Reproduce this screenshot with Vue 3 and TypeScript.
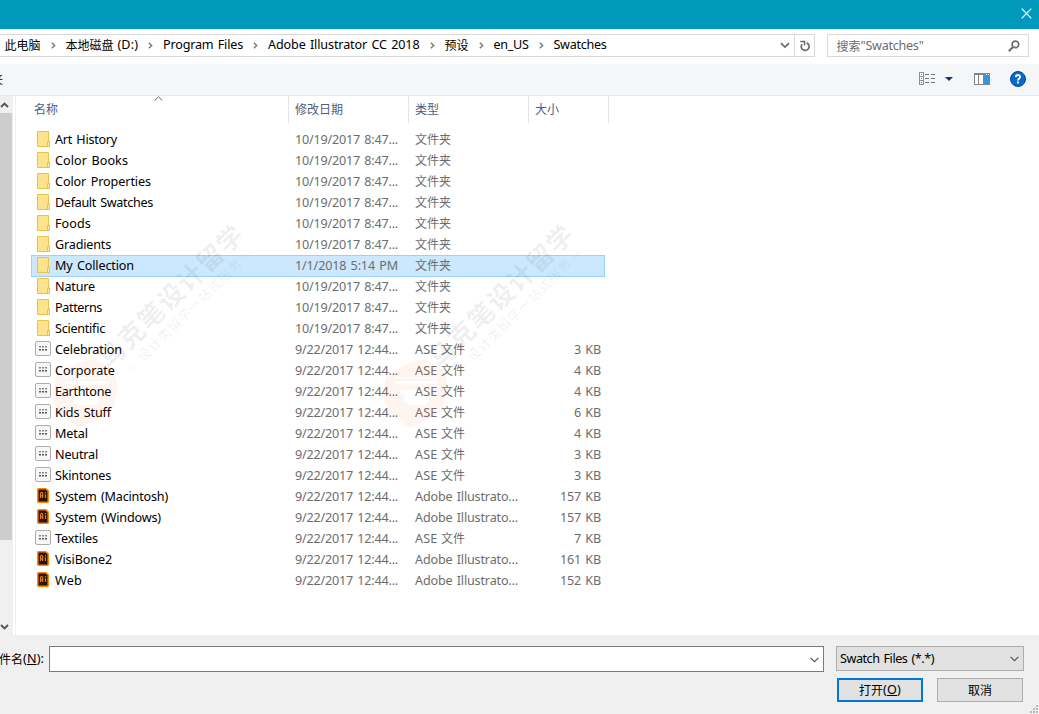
<script setup lang="ts">
type Kind = 'folder' | 'ase' | 'ai'
interface Entry { name: string; w: number; kind: Kind; date: string; size?: string }

const OCT = '10/19/2017 8:47...'
const SEP = '9/22/2017 12:44...'

const entries: Entry[] = [
  { name: 'Art History', w: 62, kind: 'folder', date: OCT },
  { name: 'Color Books', w: 73, kind: 'folder', date: OCT },
  { name: 'Color Properties', w: 96, kind: 'folder', date: OCT },
  { name: 'Default Swatches', w: 98, kind: 'folder', date: OCT },
  { name: 'Foods', w: 36, kind: 'folder', date: OCT },
  { name: 'Gradients', w: 56, kind: 'folder', date: OCT },
  { name: 'My Collection', w: 79, kind: 'folder', date: '1/1/2018 5:14 PM' },
  { name: 'Nature', w: 40, kind: 'folder', date: OCT },
  { name: 'Patterns', w: 47, kind: 'folder', date: OCT },
  { name: 'Scientific', w: 50, kind: 'folder', date: OCT },
  { name: 'Celebration', w: 67, kind: 'ase', date: SEP, size: '3' },
  { name: 'Corporate', w: 60, kind: 'ase', date: SEP, size: '4' },
  { name: 'Earthtone', w: 56, kind: 'ase', date: SEP, size: '4' },
  { name: 'Kids Stuff', w: 56, kind: 'ase', date: SEP, size: '6' },
  { name: 'Metal', w: 33, kind: 'ase', date: SEP, size: '4' },
  { name: 'Neutral', w: 43, kind: 'ase', date: SEP, size: '3' },
  { name: 'Skintones', w: 56, kind: 'ase', date: SEP, size: '3' },
  { name: 'System (Macintosh)', w: 113, kind: 'ai', date: SEP, size: '157' },
  { name: 'System (Windows)', w: 106, kind: 'ai', date: SEP, size: '157' },
  { name: 'Textiles', w: 43, kind: 'ase', date: SEP, size: '7' },
  { name: 'VisiBone2', w: 57, kind: 'ai', date: SEP, size: '161' },
  { name: 'Web', w: 27, kind: 'ai', date: SEP, size: '152' },
]
const selected = 'My Collection'

const crumbs = [
  { text: '此电脑', w: 36 },
  { text: '本地磁盘', w: 48, tail: '(D:)', tw: 20.5 },
  { text: 'Program Files', w: 80 },
  { text: 'Adobe Illustrator CC 2018', w: 151.5 },
  { text: '预设', w: 24 },
  { text: 'en_US', w: 35 },
  { text: 'Swatches', w: 53 },
]
const isLatin = (s: string) => /^[\x00-\x7f]+$/.test(s)

// Spreads letter spacing so that a label takes up the given advance width.
const vFit = {
  mounted(el: HTMLElement, binding: { value: number }) {
    const n = (el.textContent ?? '').length
    const natural = el.getBoundingClientRect().width
    if (n) el.style.letterSpacing = `${(binding.value - natural) / n}px`
  },
}
</script>

<template>
  <div class="dialog">
    <header class="title">
      <svg width="11" height="11" viewBox="0 0 11 11"><path d="M.7.7l9.6 9.6M10.3.7L.7 10.3" stroke="#fff" stroke-width="1.2" /></svg>
    </header>

    <div class="nav">
      <div class="address">
        <template v-for="(c, i) in crumbs" :key="c.text">
          <span v-if="i" class="sep"><svg width="5" height="7" viewBox="0 0 5 7"><path d="M.8.7L3.7 3.5.8 6.3" fill="none" stroke="#777" stroke-width="1.4" /></svg></span>
          <span v-fit="c.w" class="crumb" :class="isLatin(c.text) ? 'lat' : 'cjk'">{{ c.text }}</span>
          <span v-if="c.tail" v-fit="c.tw" class="crumb lat tail">{{ c.tail }}</span>
        </template>
        <span class="drop"><svg width="10" height="7" viewBox="0 0 10 7"><path d="M1 1.2l4 3.9 4-3.9" fill="none" stroke="#6c6c6c" stroke-width="1.8" /></svg></span>
        <span class="refresh"><svg width="10" height="12" viewBox="0 0 10 12"><path d="M6.6 2.9A3.9 3.9 0 1 1 2 4.2" fill="none" stroke="#6c6c6c" stroke-width="1.7" /><path d="M.3 1.4h4.2v4.1" fill="none" stroke="#6c6c6c" stroke-width="1.5" /></svg></span>
      </div>
      <div class="search">
        <span class="cjk">搜索</span><span v-fit="63" class="lat">"Swatches"</span>
        <svg width="12" height="12" viewBox="0 0 12 12"><circle cx="7.4" cy="4.4" r="3.3" fill="none" stroke="#6c6c6c" stroke-width="1.7" /><path d="M5 7L.8 11.2" stroke="#6c6c6c" stroke-width="2" /></svg>
      </div>
    </div>

    <div class="toolbar">
      <span class="newfolder"><span class="cjk">夹</span></span>
      <svg class="views" width="17" height="14" viewBox="0 0 17 14" shape-rendering="crispEdges">
        <path d="M.5.5h4v12h-4zM.5 4.5h4M.5 8.5h4" fill="#fff" stroke="#8f8f8f" />
        <path d="M2 2h1v1H2z" fill="#4c8bc8" /><path d="M2 6h1v1H2z" fill="#4c8bc8" /><path d="M2 10h1v1H2z" fill="#e02020" />
        <path d="M6 2.5h4M12 2.5h4M6 6.5h4M12 6.5h4M6 10.5h4M12 10.5h4" stroke="#777" />
      </svg>
      <svg class="caret" width="8" height="4" viewBox="0 0 8 4"><path d="M0 0h8L4 4z" fill="#17376b" /></svg>
      <svg class="pane" width="16" height="12" viewBox="0 0 16 12" shape-rendering="crispEdges">
        <path d="M0 0h16v12H0z" fill="#858585" /><path d="M1 2h3v9H1zM5 2h4v9H5z" fill="#fff" /><path d="M9 2h6v9H9z" fill="#3595e5" /><path d="M12 1h1v1h-1zM14 1h1v1h-1z" fill="#fff" />
      </svg>
      <svg class="help" width="16" height="16" viewBox="0 0 16 16"><circle cx="8" cy="8" r="7.5" fill="#0868cb" stroke="#004a9c" /><path d="M5.9 6.1C5.9 3.3 10.1 3.4 10.1 5.8 10.1 7.4 8 7.5 8 9.4" fill="none" stroke="#fff" stroke-width="1.9" /><path d="M7.1 10.6h1.8v1.8H7.1z" fill="#fff" /></svg>
    </div>

    <main class="body">
      <div class="scroll">
        <span class="arrow"><svg width="9" height="6" viewBox="0 0 9 6"><path d="M1 5l3.5-3.5L8 5" fill="none" stroke="#555" stroke-width="1.9" /></svg></span>
        <span class="thumb"></span>
        <span class="arrow end"><svg width="9" height="6" viewBox="0 0 9 6"><path d="M1 1l3.5 3.5L8 1" fill="none" stroke="#555" stroke-width="1.9" /></svg></span>
      </div>
      <div class="list">
        <div class="head cjk">
          <span class="h-name">名称<svg class="sort" width="9" height="5" viewBox="0 0 9 5"><path d="M.7 4.5l3.8-3.7 3.8 3.7" fill="none" stroke="#666" /></svg></span>
          <span class="h-col">修改日期</span>
          <span class="h-col">类型</span>
          <span class="h-col h-size">大小</span>
        </div>
        <div class="rows">
          <div v-for="e in entries" :key="e.name" class="row" :class="{ selected: e.name === selected }">
            <span class="icon">
              <svg v-if="e.kind === 'folder'" class="folder" width="14" height="16" viewBox="0 0 14 16">
                <path d="M.5.5h11v9.5h1v5.5H.5z" fill="#ffe38c" stroke="#e8c24a" />
                <path d="M10.5 10.5h2v5h-2z" fill="#ffe9a2" stroke="#e8c24a" />
              </svg>
              <svg v-else-if="e.kind === 'ase'" width="16" height="15" viewBox="0 0 16 15">
                <rect x=".5" y=".5" width="15" height="14" rx="1.5" fill="#f7f7f7" stroke="#adadad" />
                <path d="M4 5h2v1.5H4zM7 5h2v1.5H7zM10 5h2v1.5h-2z" fill="#888" />
                <path d="M4 8h2v1.6H4zM7 8h2v1.6H7zM10 8h2v1.6h-2z" fill="#555" />
              </svg>
              <svg v-else class="ai" width="12" height="15" viewBox="0 0 12 15">
                <path d="M1.4.8h7.4l2.4 2.1v10.7l-.6.6H1.4l-.6-.6V1.4z" fill="#281307" stroke="#ff8200" stroke-width="1.5" />
                <path d="M3.5 10V5.5L4.2 4.5h.8l.7 1V10M3.5 7.8h2.2M8.5 6.2V10M8.5 4v1.2" fill="none" stroke="#e87a1c" stroke-width="1.2" />
              </svg>
            </span>
            <span class="c-name"><span v-fit="e.w" class="lat">{{ e.name }}</span></span>
            <span class="c-date"><span v-fit="103" class="lat">{{ e.date }}</span></span>
            <span class="c-type">
              <span v-if="e.kind === 'folder'" class="cjk">文件夹</span>
              <span v-else-if="e.kind === 'ai'" v-fit="103" class="lat">Adobe Illustrato...</span>
              <template v-else><span v-fit="22.5" class="lat ase">ASE</span><span class="cjk">文件</span></template>
            </span>
            <span class="c-size"><span v-if="e.size" v-fit="e.size.length > 1 ? 41 : 27" class="lat">{{ e.size }} KB</span></span>
          </div>
        </div>
      </div>
    </main>

    <footer class="footer">
      <div class="line">
        <label class="label"><span class="cjk">件名</span><span v-fit="21" class="lat">(<u>N</u>):</span></label>
        <div class="filename"><svg width="9" height="6" viewBox="0 0 9 6"><path d="M.6.8l3.9 3.9L8.4.8" fill="none" stroke="#555" stroke-width="1.2" /></svg></div>
        <div class="filter"><span v-fit="94" class="lat">Swatch Files (*.*)</span><svg width="9" height="6" viewBox="0 0 9 6"><path d="M.6.8l3.9 3.9L8.4.8" fill="none" stroke="#555" stroke-width="1.2" /></svg></div>
      </div>
      <div class="buttons">
        <button class="btn primary"><span class="cjk">打开</span><span v-fit="18" class="lat">(<u>O</u>)</span></button>
        <button class="btn"><span class="cjk">取消</span></button>
      </div>
      <svg class="grip" width="8" height="8" viewBox="0 0 8 8" shape-rendering="crispEdges"><path d="M6 0h2v2H6zM3 3h2v2H3zM6 3h2v2H6zM0 6h2v2H0zM3 6h2v2H3zM6 6h2v2H6z" fill="#b8b8b8" /></svg>
    </footer>

    <svg class="mark" width="1039" height="714" viewBox="0 0 1039 714">
      <g v-for="dx in [0, 330]" :key="dx" :transform="`translate(${dx} 0)`">
        <path fill-rule="evenodd" d="M70 367Q94 356 99 361L113 371Q116 375 118 390L113 408Q111 413 106 415L82 427Q77 428 73 424L59 413 52 396 56 377ZM66 377v1.5h42V377ZM66 381v3.5h42V381ZM71 390v4h3v9h4v2h18v-2h3v-9h2v-4Z" fill="#ff7a45" fill-opacity=".08" />
        <g transform="translate(111.7 355) rotate(-44.3)" fill="#000" fill-opacity=".07">
          <text class="m-big" x="-12" y="9">马克笔设计留学</text>
          <text class="m-small" x="1" y="27">— 设计类留学一站式服务 —</text>
        </g>
      </g>
    </svg>
  </div>
</template>

<style>
body { margin: 0; overflow: hidden; }
</style>

<style scoped>
.dialog { position: relative; width: 1039px; height: 714px; display: flex; flex-direction: column; overflow: hidden; background: #fff; color: #000; font: 13px/20px "Noto Sans", "Noto Sans CJK SC", sans-serif; }
.dialog * { box-sizing: border-box; }
svg { display: block; flex: none; }
.lat { font: 12.6px/20px "Noto Sans", "Noto Sans CJK SC", sans-serif; white-space: pre; font-variant-ligatures: none; word-spacing: 1.2px; }
.cjk { font: 12px/20px "Noto Sans CJK SC", sans-serif; white-space: pre; }
.title { height: 29px; background: #0099bc; display: flex; justify-content: flex-end; padding: 8px 7px 0 0; }
.nav { height: 35px; display: flex; align-items: flex-start; gap: 12px; padding: 5px 10px 0 0; }
.address { width: 815px; height: 23px; border: 1px solid #d9d9d9; border-left: 0; display: flex; align-items: center; padding-left: 4.5px; }
.crumb { margin-bottom: 1px; }
.sep { width: 25px; display: flex; justify-content: center; }
.tail { margin-left: 4px; }
.drop { margin-left: auto; width: 19px; display: flex; justify-content: center; }
.refresh { width: 20px; height: 21px; border-left: 1px solid #d9d9d9; display: flex; align-items: center; justify-content: center; }
.search { flex: 1; height: 23px; border: 1px solid #d9d9d9; display: flex; align-items: center; padding: 0 8px 0 8.5px; color: #6d6d6d; }
.search svg { margin-left: auto; }
.toolbar { height: 32px; background: #f5f6f7; border-bottom: 1px solid #e8e9eb; display: flex; align-items: center; padding: 0 13px 1px 0; }
.newfolder { width: 3px; display: flex; justify-content: flex-end; overflow: hidden; color: #1e395b; margin-right: auto; }
.views { margin-right: 9px; }
.caret { margin-right: 21px; }
.pane { margin-right: 20px; }
.body { height: 539px; display: flex; }
.scroll { width: 13px; background: #f0f0f0; display: flex; flex-direction: column; padding-right: 1px; }
.arrow { height: 17px; display: flex; align-items: center; }
.thumb { height: 427px; background: #cdcdcd; }
.end { margin-top: auto; }
.list { flex: 1; margin-left: 2px; border-left: 1px solid #f2f2f2; }
.head { display: flex; height: 27px; line-height: 26px; color: #4c607a; padding-left: 18px; }
.h-name { position: relative; width: 255px; border-right: 1px solid #e5e5e5; }
.sort { position: absolute; left: 120px; top: 0; }
.h-col { width: 120px; padding-left: 6px; border-right: 1px solid #e5e5e5; }
.h-size { width: 80px; }
.rows { padding: 6px 0 0 15px; }
.row { width: 574px; height: 21px; display: flex; color: #6d6d6d; }
.row.selected { background: #cce8ff; box-shadow: inset 0 0 0 1px #99d1ff; height: 22px; margin-bottom: -1px; }
.icon { width: 24px; padding: 2px 0 0 4px; }
.folder, .ai { margin-left: 2px; }
.c-name { width: 240px; color: #000; }
.c-date { width: 120px; }
.c-type { width: 120px; white-space: nowrap; }
.ase { margin-right: 3.5px; }
.c-size { width: 66px; text-align: right; }
.footer { position: relative; height: 79px; background: #f0f0f0; padding-top: 11px; }
.line { display: flex; height: 26px; }
.label { width: 49px; display: flex; align-items: center; }
.label .cjk { margin-left: -1px; }
.filename { width: 775px; border: 1px solid #7a7a7a; background: #fff; display: flex; align-items: center; justify-content: flex-end; padding: 2px 4px 0 0; }
.filter { width: 188px; height: 25px; margin-left: 12px; border: 1px solid #adadad; background: #e1e1e1; display: flex; align-items: center; justify-content: space-between; padding: 0 4px 0 3px; }
.buttons { display: flex; gap: 14px; margin: 6px 0 0 837px; }
.btn { width: 86px; height: 24px; padding: 0 0 1px; border: 1px solid #adadad; background: #e1e1e1; color: #000; display: flex; align-items: center; justify-content: center; }
.primary { border: 2px solid #0078d7; }
.grip { position: absolute; right: 1px; bottom: 1px; }
.mark { position: absolute; left: 0; top: 0; pointer-events: none; }
.m-big { font: 700 26px "Noto Sans CJK SC", sans-serif; letter-spacing: 1.4px; }
.m-small { font: 13.5px "Noto Sans CJK SC", sans-serif; letter-spacing: .5px; }
</style>
